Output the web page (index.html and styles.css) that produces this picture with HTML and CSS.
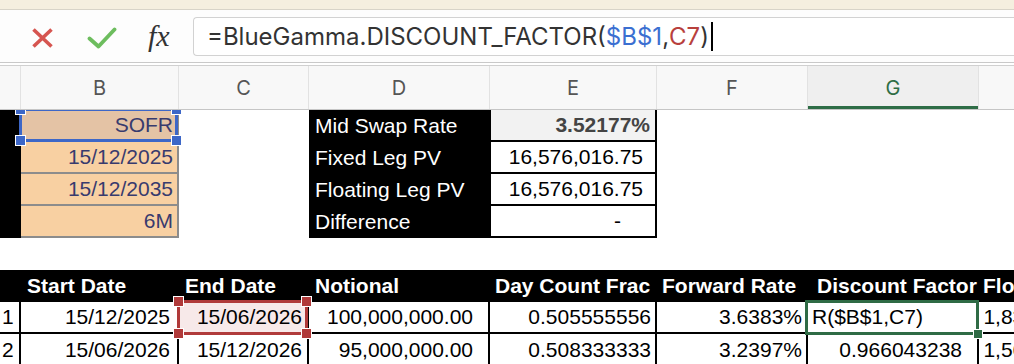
FILE: index.html
```html
<!DOCTYPE html>
<html lang="en">
<head>
    <meta charset="UTF-8">
    <meta name="viewport" content="width=device-width, initial-scale=1.0">
    <title>Swap Pricer - BlueGamma</title>
    <link rel="stylesheet" href="styles.css">
</head>
<body>
    <div class="top-band"></div>

    <div class="formula-bar">
        <div class="fb-buttons">
            <svg class="btn-cancel" width="23" height="22" viewBox="0 0 23 22">
                <path d="M2.5 2.5 L20.5 19.5 M20.5 2.5 L2.5 19.5" stroke="#d65550" stroke-width="3.6" fill="none"/>
            </svg>
            <svg class="btn-enter" width="30" height="22" viewBox="0 0 30 22">
                <path d="M2.5 11.5 L11.5 19.5 L27.5 2.5" stroke="#6dbd5e" stroke-width="3.8" stroke-linecap="round" stroke-linejoin="round" fill="none"/>
            </svg>
            <span class="fx">fx</span>
        </div>
        <div class="fb-input">
            <span>=BlueGamma.DISCOUNT_FACTOR(</span><span class="ref-blue">$B$1</span><span>,</span><span class="ref-red">C7</span><span>)</span><span class="caret"></span>
        </div>
    </div>
    <div class="fb-gap"></div>

    <div class="sheet">
        <div class="grid col-head">
            <div class="ch"></div>
            <div class="ch">B</div>
            <div class="ch">C</div>
            <div class="ch">D</div>
            <div class="ch">E</div>
            <div class="ch">F</div>
            <div class="ch ch-active">G</div>
            <div class="ch"></div>
        </div>

        <!-- inputs and results -->
        <div class="grid row">
            <div class="c blk"></div>
            <div class="c num input input-active sel">SOFR
                <span class="hl hl-blue"><i class="h tl"></i><i class="h tr"></i><i class="h bl"></i><i class="h br"></i></span>
            </div>
            <div class="c"></div>
            <div class="c label">Mid Swap Rate</div>
            <div class="c num out out-head">3.52177%</div>
            <div class="c"></div>
            <div class="c"></div>
            <div class="c"></div>
        </div>
        <div class="grid row">
            <div class="c blk"></div>
            <div class="c num input">15/12/2025</div>
            <div class="c"></div>
            <div class="c label">Fixed Leg PV</div>
            <div class="c num out">16,576,016.75</div>
            <div class="c"></div>
            <div class="c"></div>
            <div class="c"></div>
        </div>
        <div class="grid row">
            <div class="c blk"></div>
            <div class="c num input">15/12/2035</div>
            <div class="c"></div>
            <div class="c label">Floating Leg PV</div>
            <div class="c num out">16,576,016.75</div>
            <div class="c"></div>
            <div class="c"></div>
            <div class="c"></div>
        </div>
        <div class="grid row">
            <div class="c blk"></div>
            <div class="c num input">6M</div>
            <div class="c"></div>
            <div class="c label">Difference</div>
            <div class="c num out dash">-</div>
            <div class="c"></div>
            <div class="c"></div>
            <div class="c"></div>
        </div>
        <div class="grid row"></div>

        <!-- schedule -->
        <div class="grid row hdr">
            <div class="c"></div>
            <div class="c">Start Date</div>
            <div class="c">End Date</div>
            <div class="c">Notional</div>
            <div class="c hdr-e">Day Count Frac</div>
            <div class="c hdr-e">Forward Rate</div>
            <div class="c hdr-g">Discount Factor</div>
            <div class="c hdr-h">Floating Payment</div>
        </div>
        <div class="grid row data first">
            <div class="c idx">1</div>
            <div class="c num pb">15/12/2025</div>
            <div class="c num pc ref-cell sel">15/06/2026
                <span class="hl hl-red"><i class="h tl"></i><i class="h tr"></i><i class="h bl"></i><i class="h br"></i></span>
            </div>
            <div class="c num pd">100,000,000.00</div>
            <div class="c num pe">0.505555556</div>
            <div class="c num pe">3.6383%</div>
            <div class="c editing sel">R($B$1,C7)
                <span class="hl hl-green"><i class="fill-handle"></i></span>
            </div>
            <div class="c num pd">1,839,363.61</div>
        </div>
        <div class="grid row data">
            <div class="c idx">2</div>
            <div class="c num pb">15/06/2026</div>
            <div class="c num pc">15/12/2026</div>
            <div class="c num pd">95,000,000.00</div>
            <div class="c num pe">0.508333333</div>
            <div class="c num pe">3.2397%</div>
            <div class="c num pd">0.966043238</div>
            <div class="c num pd">1,564,448.27</div>
        </div>
    </div>
</body>
</html>
```

FILE: styles.css
```css
body {
    margin: 0;
    width: 1014px;
    height: 364px;
    overflow: hidden;
    background-color: #fff;
    font-family: 'Liberation Sans', Arial, sans-serif;
}

/* window chrome + formula bar */
.top-band {
    height: 9px;
    background-color: #f5efdf;
    border-bottom: 1px solid #d8d4c8;
}
.formula-bar {
    display: flex;
    align-items: center;
    height: 52px;
    background-color: #fdfdfd;
    border-bottom: 1px solid #c9c9c9;
}
.fb-buttons {
    display: flex;
    align-items: center;
    width: 193px;
    flex-shrink: 0;
}
.btn-cancel {
    display: block;
    margin-left: 31px;
    margin-top: 3px;
}
.btn-enter {
    display: block;
    margin-left: 33px;
    margin-top: 3px;
}
.fx {
    margin-left: 31px;
    font-family: 'Liberation Serif', 'Times New Roman', serif;
    font-style: italic;
    font-size: 30px;
    color: #333;
}
.fb-input {
    flex: 1;
    align-self: stretch;
    margin: 7px 0 6px;
    display: flex;
    align-items: center;
    padding-left: 13px;
    background-color: #fff;
    border: 1px solid #d2d2d2;
    border-right: none;
    border-radius: 4px 0 0 4px;
    font-family: Inter, 'Liberation Sans', sans-serif;
    font-size: 24px;
    color: #333;
    white-space: pre;
}
.ref-blue {
    color: #3b6fd1;
}
.ref-red {
    color: #b8403c;
}
.caret {
    width: 2px;
    height: 29px;
    margin-left: 2px;
    background-color: #000;
}
.fb-gap {
    height: 2px;
    border-bottom: 1px solid #d0d0d0;
}

/* sheet grid */
.sheet {
    width: 1123px;
}
.grid {
    display: grid;
    grid-template-columns: 21px 158px 130px 181px 167px 151px 171px 144px;
}
.col-head {
    position: relative;
    z-index: 3;
    height: 43px;
    background-color: #f8f8f8;
    border-bottom: 1px solid #c6c6c6;
}
.ch {
    display: flex;
    align-items: center;
    justify-content: center;
    border-right: 1px solid #e2e2e2;
    font-family: Inter, 'Liberation Sans', sans-serif;
    font-size: 20px;
    color: #555;
}
.ch-active {
    background-color: #efefef;
    color: #2e6e45;
    box-shadow: inset 0 -3px 0 #2e6d46;
}
.row {
    height: 32px;
}
.c {
    box-sizing: border-box;
    display: flex;
    align-items: center;
    padding: 0 6px;
    font-size: 21px;
    color: #000;
    white-space: nowrap;
}
.num {
    justify-content: flex-end;
}
.sel {
    position: relative;
}

/* inputs block */
.blk {
    background-color: #000;
}
.input {
    padding-right: 4px;
    background-color: #f8d0a2;
    color: #383b6e;
    border-right: 2px solid #8c8c8c;
    border-bottom: 2px solid #8c8c8c;
}
.input-active {
    background-color: #e4c3a5;
}
.label {
    background-color: #000;
    color: #fff;
}
.out {
    padding-right: 12px;
    background-color: #fff;
    border-left: 1px solid #000;
    border-right: 2px solid #000;
    border-bottom: 2px solid #000;
}
.out-head {
    padding-right: 5px;
    background-color: #f2f2f2;
    font-weight: bold;
    color: #444;
}
.dash {
    padding-right: 34px;
}

/* schedule table */
.hdr {
    background-color: #000;
}
.hdr .c {
    color: #fff;
    font-weight: bold;
}
.hdr .hdr-e {
    padding-left: 5px;
}
.hdr .hdr-g {
    padding-left: 9px;
}
.hdr .hdr-h {
    padding-left: 4px;
}
.data .c {
    border-right: 2px solid #000;
}
.data.first .c {
    border-bottom: 2px solid #000;
}
.data .idx {
    padding-left: 2px;
}
.pb {
    padding-right: 7px;
}
.pc {
    padding-right: 5px;
}
.pd {
    padding-right: 15px;
}
.pe {
    padding-right: 4px;
}
.ref-cell {
    background-color: #f7e9e9;
}
.editing {
    padding-left: 4px;
}

/* reference highlights */
.hl {
    position: absolute;
    z-index: 1;
    border: 3px solid;
}
.hl-blue {
    top: -2px;
    left: -2px;
    right: -1px;
    bottom: -2px;
    border-color: #3d67c7;
}
.hl-red {
    top: -2px;
    left: -2px;
    right: -1px;
    bottom: -3px;
    border-color: #b03a3a;
}
.hl-green {
    top: -2px;
    left: -3px;
    right: -2px;
    bottom: -3px;
    border-color: #2f6b45;
}
.h {
    position: absolute;
    width: 9px;
    height: 9px;
    border: 1px solid #fff;
}
.hl-blue .h {
    background-color: #3d67c7;
}
.hl-red .h {
    background-color: #b03a3a;
}
.tl { top: -7px; left: -7px; }
.tr { top: -7px; right: -7px; }
.bl { bottom: -7px; left: -7px; }
.br { bottom: -7px; right: -7px; }
.fill-handle {
    position: absolute;
    right: -7px;
    bottom: -7px;
    width: 8px;
    height: 8px;
    background-color: #2f6b45;
    border: 1px solid #fff;
}
```
